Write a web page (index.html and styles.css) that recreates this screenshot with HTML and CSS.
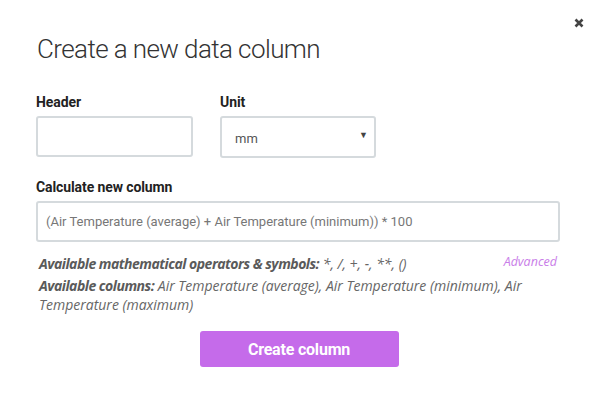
FILE: index.html
```html
<!DOCTYPE html>
<html>
<head>
<meta charset="utf-8">
<link rel="stylesheet" href="styles.css">
</head>
<body>
<div class="modal">
  <button class="close" aria-label="Close">
    <svg width="10" height="10" viewBox="0 0 10 10"><path d="M1.5 1.5 L8.5 8.5 M8.5 1.5 L1.5 8.5" stroke="#444" stroke-width="2.6" stroke-linecap="butt"/></svg>
  </button>
  <h1 class="title">Create a new data column</h1>
  <div class="row">
    <div class="field">
      <label class="label">Header</label>
      <div class="box box-header"></div>
    </div>
    <div class="field">
      <label class="label">Unit</label>
      <div class="box box-unit"><span class="unit-text">mm</span><span class="caret">▼</span></div>
    </div>
  </div>
  <label class="label label-calc">Calculate new column</label>
  <div class="box box-formula"><span class="formula-text">(Air Temperature (average) + Air Temperature (minimum)) * 100</span></div>
  <div class="hint hint-ops"><span><b>Available mathematical operators &amp; symbols:</b> *, /, +, -, **, ()</span><span class="advanced">Advanced</span></div>
  <div class="hint hint-cols"><b>Available columns:</b> Air Temperature (average), Air Temperature (minimum), Air Temperature (maximum)</div>
  <div class="actions"><button class="btn">Create column</button></div>
</div>
</body>
</html>
```
FILE: styles.css
```css
html, body {
  margin: 0;
  padding: 0;
  background: #fff;
}
body {
  font-family: Roboto, "Liberation Sans", sans-serif;
  color: #333;
}
.modal {
  position: relative;
  width: 597px;
  height: 410px;
  box-sizing: border-box;
  padding: 34px 37px 0 36px;
}
.close {
  position: absolute;
  top: 17px;
  right: 12px;
  width: 12px;
  height: 12px;
  padding: 0;
  border: 0;
  background: none;
  display: flex;
  align-items: center;
  justify-content: center;
}
.title {
  margin: 0 0 30px 1px;
  font-size: 26px;
  line-height: 30px;
  font-weight: 300;
  color: #333;
  letter-spacing: -0.6px;
}
.row {
  display: flex;
  gap: 27px;
}
.field {
  display: flex;
  flex-direction: column;
}
.label {
  display: block;
  font-size: 14px;
  line-height: 16px;
  font-weight: 700;
  color: #222;
  letter-spacing: -0.1px;
  margin-bottom: 6px;
}
.box {
  box-sizing: border-box;
  border: 2px solid #d5dadd;
  border-radius: 3px;
  height: 41px;
  background: #fff;
}
.box-header { width: 157px; }
.box-unit {
  width: 156px;
  height: 42px;
  display: flex;
  align-items: center;
  justify-content: space-between;
  padding: 0 6px 0 13px;
}
.unit-text {
  font-size: 13px;
  color: #555;
  margin-top: 2px;
}
.caret {
  font-size: 9px;
  color: #444;
  margin-top: -4px;
}
.label-calc {
  margin-top: 21px;
}
.box-formula {
  width: 524px;
  display: flex;
  align-items: center;
  padding-left: 8px;
}
.formula-text {
  font-size: 13px;
  color: #777;
}
.hint {
  font-family: "Open Sans", Roboto, sans-serif;
  font-size: 14px;
  line-height: 19px;
  font-style: italic;
  color: #666;
  padding-left: 3px;
  width: 521px;
}
.hint b {
  font-weight: 700;
  color: #5a5a5a;
  letter-spacing: -0.5px;
}
.hint-ops {
  margin-top: 12px;
  display: flex;
  justify-content: space-between;
}
.advanced {
  color: #c97de8;
  font-size: 12.5px;
  line-height: 16px;
  margin-right: 3px;
}
.hint-cols {
  margin-top: 3px;
}
.actions {
  display: flex;
  justify-content: center;
  margin-top: 17px;
  width: 524px;
}
.btn {
  width: 199px;
  height: 36px;
  margin-left: 2px;
  border: 0;
  border-radius: 3px;
  background: #c56bea;
  color: #fff;
  font-family: Roboto, "Liberation Sans", sans-serif;
  font-size: 16px;
  font-weight: 700;
  letter-spacing: -0.2px;
}
```
